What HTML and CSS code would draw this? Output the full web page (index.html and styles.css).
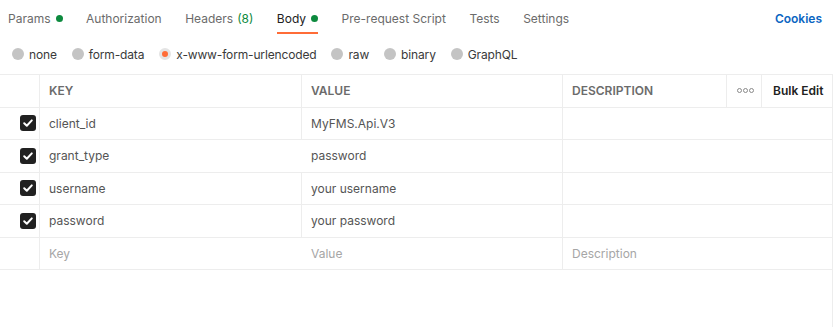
FILE: index.html
```html
<!DOCTYPE html>
<html>
<head>
<meta charset="utf-8">
<link rel="stylesheet" href="styles.css">
</head>
<body>
<div class="page">
  <div class="tabs">
    <div class="tab">Params <span class="dot"></span></div>
    <div class="tab">Authorization</div>
    <div class="tab">Headers <span class="count">(8)</span></div>
    <div class="tab active">Body <span class="dot"></span></div>
    <div class="tab">Pre-request Script</div>
    <div class="tab">Tests</div>
    <div class="tab">Settings</div>
    <div class="spacer"></div>
    <div class="cookies">Cookies</div>
  </div>
  <div class="radios">
    <div class="radio"><span class="circle"></span>none</div>
    <div class="radio"><span class="circle"></span>form-data</div>
    <div class="radio sel"><span class="circle"></span>x-www-form-urlencoded</div>
    <div class="radio"><span class="circle"></span>raw</div>
    <div class="radio"><span class="circle"></span>binary</div>
    <div class="radio"><span class="circle"></span>GraphQL</div>
  </div>
  <div class="tablewrap">
    <div class="grid">
      <div class="cell hd"></div>
      <div class="cell hd">KEY</div>
      <div class="cell hd">VALUE</div>
      <div class="cell hd">DESCRIPTION</div>
      <div class="cell hd more"><span></span><span></span><span></span></div>
      <div class="cell hd bulk">Bulk Edit</div>

      <div class="cell chk"><span class="box"><svg viewBox="0 0 16 16" width="16" height="16"><path d="M4.2 8.3 L6.8 10.8 L11.8 5.4" fill="none" stroke="#fff" stroke-width="2" stroke-linecap="round" stroke-linejoin="round"/></svg></span></div>
      <div class="cell">client_id</div>
      <div class="cell">MyFMS.Api.V3</div>
      <div class="cell desc"></div>

      <div class="cell chk"><span class="box"><svg viewBox="0 0 16 16" width="16" height="16"><path d="M4.2 8.3 L6.8 10.8 L11.8 5.4" fill="none" stroke="#fff" stroke-width="2" stroke-linecap="round" stroke-linejoin="round"/></svg></span></div>
      <div class="cell">grant_type</div>
      <div class="cell">password</div>
      <div class="cell desc"></div>

      <div class="cell chk"><span class="box"><svg viewBox="0 0 16 16" width="16" height="16"><path d="M4.2 8.3 L6.8 10.8 L11.8 5.4" fill="none" stroke="#fff" stroke-width="2" stroke-linecap="round" stroke-linejoin="round"/></svg></span></div>
      <div class="cell">username</div>
      <div class="cell">your username</div>
      <div class="cell desc"></div>

      <div class="cell chk"><span class="box"><svg viewBox="0 0 16 16" width="16" height="16"><path d="M4.2 8.3 L6.8 10.8 L11.8 5.4" fill="none" stroke="#fff" stroke-width="2" stroke-linecap="round" stroke-linejoin="round"/></svg></span></div>
      <div class="cell">password</div>
      <div class="cell">your password</div>
      <div class="cell desc"></div>

      <div class="cell chk"></div>
      <div class="cell ph">Key</div>
      <div class="cell ph">Value</div>
      <div class="cell desc ph">Description</div>
    </div>
  </div>
</div>
</body>
</html>
```

FILE: styles.css
```css
html, body {
  margin: 0;
  padding: 0;
  background: #fff;
}
body {
  font-family: Inter, "Noto Sans", sans-serif;
  font-size: 12px;
  color: #212121;
}
.page {
  width: 840px;
  height: 327px;
  overflow: hidden;
}
.tabs {
  display: flex;
  align-items: center;
  gap: 23.5px;
  height: 36px;
  padding: 0 8px;
  box-sizing: border-box;
}
.tab {
  display: flex;
  align-items: center;
  gap: 5px;
  color: #6b6b6b;
  height: 36px;
  position: relative;
}
.tab.active {
  color: #212121;
}
.tab.active::after {
  content: "";
  position: absolute;
  left: 0;
  right: 0;
  bottom: 2px;
  height: 2px;
  background: #ff6c37;
}
.dot {
  width: 7px;
  height: 7px;
  border-radius: 50%;
  background: #0d8a3e;
  display: inline-block;
}
.count {
  color: #0d8a3e;
  margin-left: -1px;
}
.spacer {
  flex: 1;
}
.cookies {
  color: #0b65c2;
  font-weight: 600;
  margin-right: 10px;
}
.radios {
  display: flex;
  align-items: center;
  height: 36px;
  padding: 0 12px;
  gap: 15px;
}
.radio {
  display: flex;
  align-items: center;
  gap: 5px;
  color: #3a3a3a;
  letter-spacing: -0.15px;
}
.circle {
  width: 12px;
  height: 12px;
  border-radius: 50%;
  background: #c4c4c4;
  display: inline-block;
  box-sizing: border-box;
}
.radio.sel .circle {
  background: #ff6c37;
  border: 3px solid #e4e4e4;
}
.tablewrap {
  width: 833px;
  height: 260px;
  box-sizing: border-box;
  border-right: 1px solid #ededed;
  margin-top: 2px;
}
.grid {
  display: grid;
  grid-template-columns: 40px 262px 261px 164px 35px 70px;
  grid-auto-rows: 32.5px;
  border-top: 1px solid #ededed;
}
.cell {
  border-bottom: 1px solid #ededed;
  border-right: 1px solid #ededed;
  display: flex;
  align-items: center;
  padding-left: 9px;
  color: #555;
  box-sizing: border-box;
  white-space: nowrap;
}
.cell:nth-child(6n) {
  border-right: none;
}
.hd {
  font-size: 12px;
  font-weight: 600;
  color: #6b6b6b;
}
.more {
  gap: 1px;
  padding-left: 10px;
}
.more span {
  width: 3px;
  height: 3px;
  border: 1px solid #8a8a8a;
  border-radius: 50%;
  display: inline-block;
}
.bulk {
  color: #212121;
  padding-left: 11px;
}
.desc {
  grid-column: span 3;
  border-right: none;
}
.chk {
  padding-left: 20px;
}
.box {
  width: 16px;
  height: 16px;
  border-radius: 3px;
  background: #212121;
  display: flex;
}
.ph {
  color: #a6a6a6;
}
```
